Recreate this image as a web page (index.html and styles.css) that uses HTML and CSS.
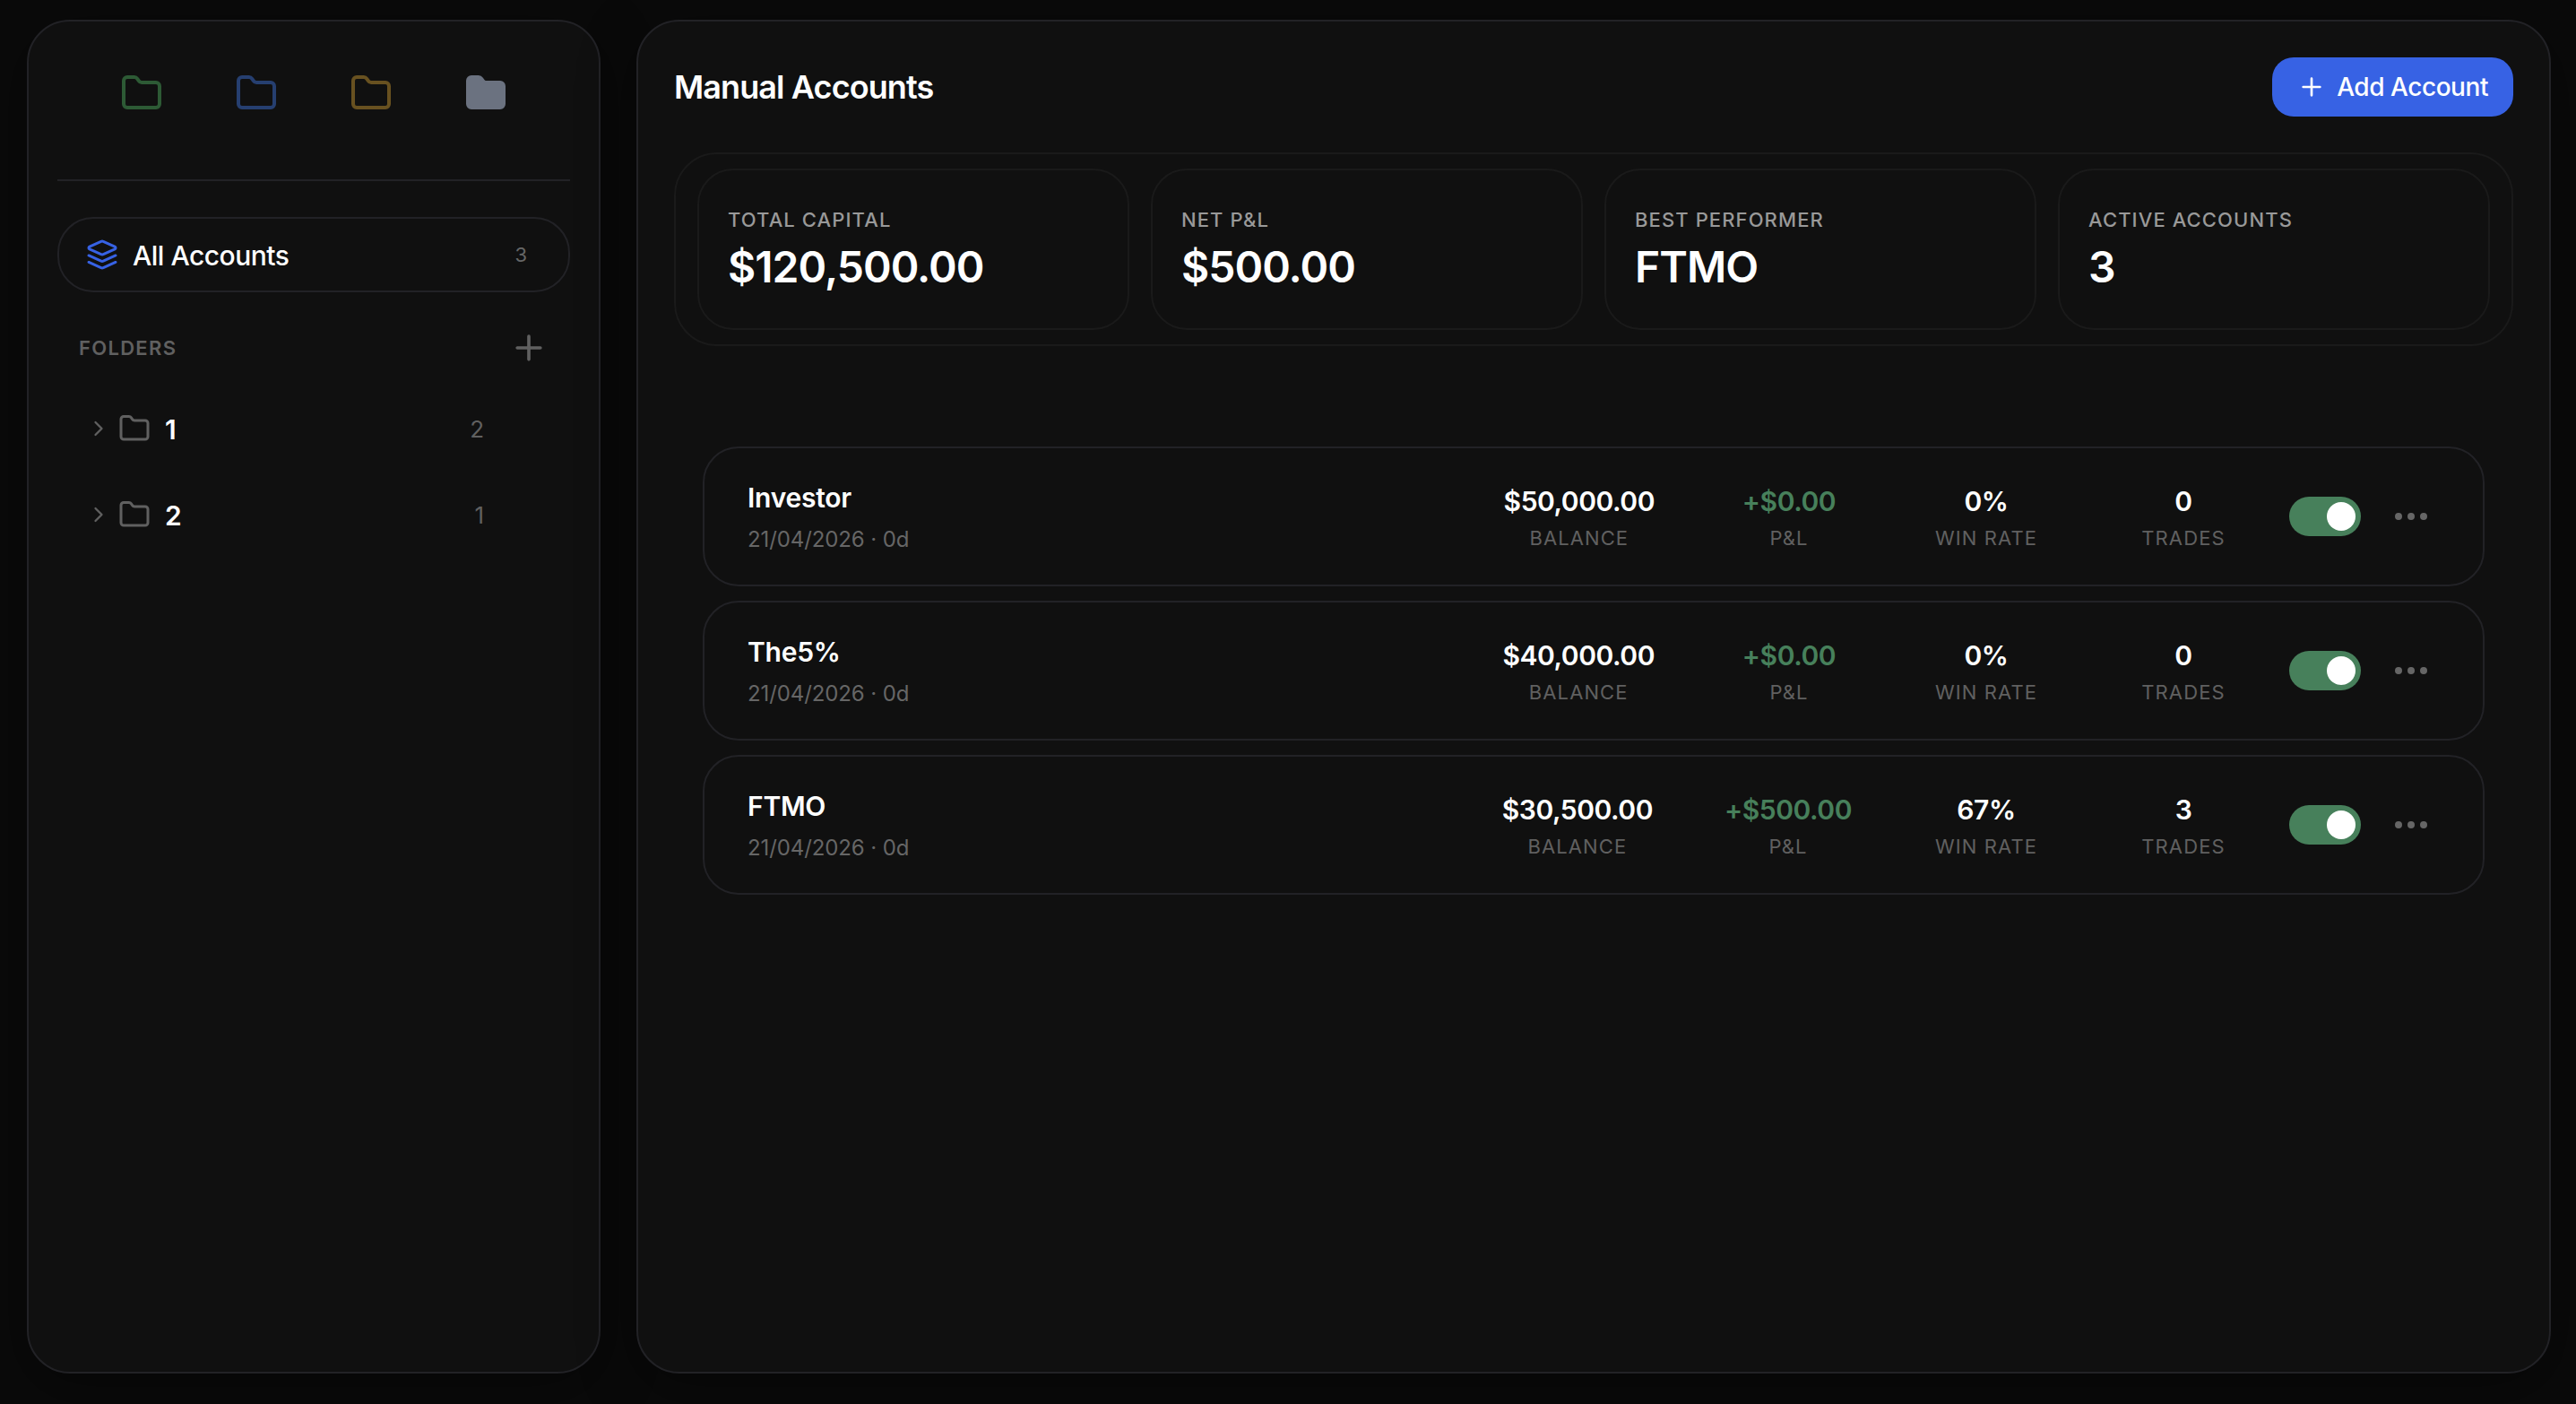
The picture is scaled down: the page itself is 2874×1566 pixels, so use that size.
FILE: index.html
```html
<!DOCTYPE html>
<html lang="en">
<head>
	<meta charset="utf-8">
	<title>Manual Accounts</title>
	<link rel="stylesheet" href="styles.css">
</head>
<body>
	<!-- shared icons -->
	<svg class="sprite">
		<symbol id="folder" viewBox="0 0 24 24"><path d="M20 20a2 2 0 0 0 2-2V8a2 2 0 0 0-2-2h-7.9a2 2 0 0 1-1.69-.9L9.6 3.9A2 2 0 0 0 7.93 3H4a2 2 0 0 0-2 2v13a2 2 0 0 0 2 2Z"/></symbol>
		<symbol id="plus" viewBox="0 0 24 24"><path d="M5 12h14M12 5v14"/></symbol>
		<symbol id="chevron" viewBox="0 0 24 24"><path d="m9 18 6-6-6-6"/></symbol>
		<symbol id="layers" viewBox="0 0 24 24"><path d="m12.83 2.18a2 2 0 0 0-1.66 0L2.6 6.08a1 1 0 0 0 0 1.83l8.58 3.91a2 2 0 0 0 1.66 0l8.58-3.9a1 1 0 0 0 0-1.83Z"/><path d="m22 12.65-9.17 4.16a2 2 0 0 1-1.66 0L2 12.65"/><path d="m22 17.65-9.17 4.16a2 2 0 0 1-1.66 0L2 17.65"/></symbol>
		<symbol id="dots" viewBox="0 0 24 24"><circle cx="12" cy="12" r="1"/><circle cx="19" cy="12" r="1"/><circle cx="5" cy="12" r="1"/></symbol>
	</svg>

	<div class="sidebar">
		<div class="tabs">
			<svg class="icon green"><use href="#folder"/></svg>
			<svg class="icon blue"><use href="#folder"/></svg>
			<svg class="icon yellow"><use href="#folder"/></svg>
			<svg class="icon gray"><use href="#folder"/></svg>
		</div>
		<div class="all">
			<svg class="icon layers"><use href="#layers"/></svg>
			<span class="all-name">All Accounts</span>
			<span class="all-count">3</span>
		</div>
		<div class="folders-head">
			<span>FOLDERS</span>
			<svg class="icon add-folder"><use href="#plus"/></svg>
		</div>
		<div class="folder">
			<svg class="icon chevron"><use href="#chevron"/></svg>
			<svg class="icon folder-icon"><use href="#folder"/></svg>
			<span class="folder-name">1</span>
			<span class="folder-count">2</span>
		</div>
		<div class="folder">
			<svg class="icon chevron"><use href="#chevron"/></svg>
			<svg class="icon folder-icon"><use href="#folder"/></svg>
			<span class="folder-name">2</span>
			<span class="folder-count">1</span>
		</div>
	</div>

	<div class="main">
		<div class="header">
			<h1>Manual Accounts</h1>
			<button class="add"><svg class="icon"><use href="#plus"/></svg>Add Account</button>
		</div>

		<div class="summary">
			<div class="card"><div class="card-label">TOTAL CAPITAL</div><div class="card-value">$120,500.00</div></div>
			<div class="card"><div class="card-label">NET P&amp;L</div><div class="card-value">$500.00</div></div>
			<div class="card"><div class="card-label">BEST PERFORMER</div><div class="card-value">FTMO</div></div>
			<div class="card"><div class="card-label">ACTIVE ACCOUNTS</div><div class="card-value">3</div></div>
		</div>

		<div class="accounts">
			<div class="account">
				<div class="info"><div class="name">Investor</div><div class="date">21/04/2026 · 0d</div></div>
				<div class="stats">
					<div class="stat"><div class="value">$50,000.00</div><div class="label">BALANCE</div></div>
					<div class="stat"><div class="value profit">+$0.00</div><div class="label">P&amp;L</div></div>
					<div class="stat"><div class="value">0%</div><div class="label">WIN RATE</div></div>
					<div class="stat"><div class="value">0</div><div class="label">TRADES</div></div>
				</div>
				<div class="toggle"><div class="knob"></div></div>
				<button class="more"><svg class="icon"><use href="#dots"/></svg></button>
			</div>
			<div class="account">
				<div class="info"><div class="name">The5%</div><div class="date">21/04/2026 · 0d</div></div>
				<div class="stats">
					<div class="stat"><div class="value">$40,000.00</div><div class="label">BALANCE</div></div>
					<div class="stat"><div class="value profit">+$0.00</div><div class="label">P&amp;L</div></div>
					<div class="stat"><div class="value">0%</div><div class="label">WIN RATE</div></div>
					<div class="stat"><div class="value">0</div><div class="label">TRADES</div></div>
				</div>
				<div class="toggle"><div class="knob"></div></div>
				<button class="more"><svg class="icon"><use href="#dots"/></svg></button>
			</div>
			<div class="account">
				<div class="info"><div class="name">FTMO</div><div class="date">21/04/2026 · 0d</div></div>
				<div class="stats">
					<div class="stat"><div class="value">$30,500.00</div><div class="label">BALANCE</div></div>
					<div class="stat"><div class="value profit">+$500.00</div><div class="label">P&amp;L</div></div>
					<div class="stat"><div class="value">67%</div><div class="label">WIN RATE</div></div>
					<div class="stat"><div class="value">3</div><div class="label">TRADES</div></div>
				</div>
				<div class="toggle"><div class="knob"></div></div>
				<button class="more"><svg class="icon"><use href="#dots"/></svg></button>
			</div>
		</div>
	</div>
</body>
</html>
```

FILE: styles.css
```css
* {
	box-sizing: border-box;
}
body {
	margin: 0;
	height: 100vh;
	padding: 22px 28px 34px 30px;
	display: flex;
	gap: 40px;
	background: #0a0a0a;
	color: #fff;
	font-family: Inter, "Liberation Sans", sans-serif;
	overflow: hidden;
}
button {
	border: none;
	background: none;
	color: inherit;
	font-family: inherit;
	cursor: pointer;
}
.sprite {
	display: none;
}
.icon {
	display: block;
	flex: none;
	width: 48px;
	height: 48px;
	fill: none;
	stroke: currentColor;
	stroke-width: 2;
	stroke-linecap: round;
	stroke-linejoin: round;
}

/* sidebar */
.sidebar, .main {
	background: #101010;
	border: 2px solid #222226;
	border-radius: 48px;
	box-shadow: 0 16px 64px rgba(0, 0, 0, .4);
}
.sidebar {
	flex: none;
	width: 640px;
	padding: 56px 32px;
}
.tabs {
	display: grid;
	grid-template-columns: repeat(4, 128px);
	justify-content: center;
	justify-items: center;
	height: 122px;
	border-bottom: 2px solid #222226;
}
.green { color: #2d5a35; }
.blue { color: #263f70; }
.yellow { color: #685120; }
.gray { color: #6b7280; fill: #6b7280; }
.all {
	display: flex;
	align-items: center;
	gap: 16px;
	height: 84px;
	margin-top: 40px;
	padding: 0 46px 0 30px;
	border: 2px solid #222226;
	border-radius: 40px;
}
.layers {
	width: 36px;
	height: 36px;
	color: #3762e4;
}
.all-name {
	flex: 1;
	padding-top: 2px;
	font-size: 30px;
	font-weight: 500;
	letter-spacing: -.5px;
}
.all-count {
	font-size: 22px;
	color: #666;
}
.folders-head {
	display: flex;
	align-items: center;
	justify-content: space-between;
	height: 44px;
	margin: 40px 24px 24px;
	font-size: 22px;
	font-weight: 600;
	letter-spacing: 1.3px;
	color: #606060;
}
.add-folder {
	width: 44px;
	height: 44px;
}
.folder {
	display: flex;
	align-items: center;
	height: 88px;
	margin-bottom: 8px;
	padding: 0 96px 0 32px;
	color: #606060;
}
.chevron {
	width: 28px;
	height: 28px;
	margin-right: 8px;
}
.folder-icon {
	width: 36px;
	height: 36px;
	margin-right: 16px;
}
.folder-name {
	flex: 1;
	padding-top: 2px;
	color: #fff;
	font-size: 30px;
	font-weight: 600;
}
.folder-count {
	font-size: 26px;
}

/* main panel */
.main {
	flex: 1;
	padding: 40px;
}
.header {
	display: flex;
	align-items: center;
	justify-content: space-between;
	height: 66px;
}
h1 {
	margin: 0;
	font-size: 36px;
	font-weight: 600;
	letter-spacing: -.9px;
}
.add {
	display: flex;
	align-items: center;
	gap: 12px;
	height: 66px;
	padding: 0 28px;
	border-radius: 24px;
	background: #3762e4;
	font-size: 28px;
	font-weight: 500;
	letter-spacing: -.45px;
}
.add .icon {
	width: 32px;
	height: 32px;
}
.summary {
	display: grid;
	grid-template-columns: repeat(4, 1fr);
	gap: 24px;
	margin-top: 40px;
	padding: 16px 24px;
	border: 2px solid #1a1a1a;
	border-radius: 48px;
}
.card {
	height: 180px;
	padding: 39px 32px 0;
	border: 2px solid #1a1a1a;
	border-radius: 40px;
}
.card-label {
	font-size: 22px;
	font-weight: 500;
	line-height: 32px;
	letter-spacing: 1.1px;
	color: #999;
}
.card-value {
	margin-top: 8px;
	font-size: 48px;
	font-weight: 600;
	line-height: 58px;
	letter-spacing: -.96px;
}

/* account rows */
.accounts {
	display: flex;
	flex-direction: column;
	gap: 16px;
	margin: 112px 32px 0;
}
.account {
	display: flex;
	align-items: center;
	height: 156px;
	padding: 0 48px;
	border: 2px solid #222226;
	border-radius: 40px;
}
.info {
	flex: 1;
}
.name {
	font-size: 30px;
	font-weight: 600;
	line-height: 45px;
	letter-spacing: -.25px;
}
.date {
	margin-top: 6px;
	font-size: 24px;
	line-height: 36px;
	letter-spacing: -.1px;
	color: #666;
}
.stats {
	display: flex;
	gap: 80px;
	margin-right: 48px;
}
.stat {
	min-width: 140px;
	text-align: center;
}
.value {
	font-size: 30px;
	font-weight: 600;
	line-height: 45px;
	letter-spacing: -.45px;
}
.profit {
	color: #47805b;
}
.label {
	margin-top: 3px;
	font-size: 22px;
	line-height: 31px;
	letter-spacing: 1.1px;
	color: #606060;
}
.toggle {
	display: flex;
	justify-content: flex-end;
	width: 80px;
	height: 44px;
	margin-right: 24px;
	padding: 6px;
	border-radius: 22px;
	background: #47805b;
}
.knob {
	width: 32px;
	height: 32px;
	border-radius: 50%;
	background: #fff;
}
.more {
	padding: 8px;
	color: #666;
}
```
